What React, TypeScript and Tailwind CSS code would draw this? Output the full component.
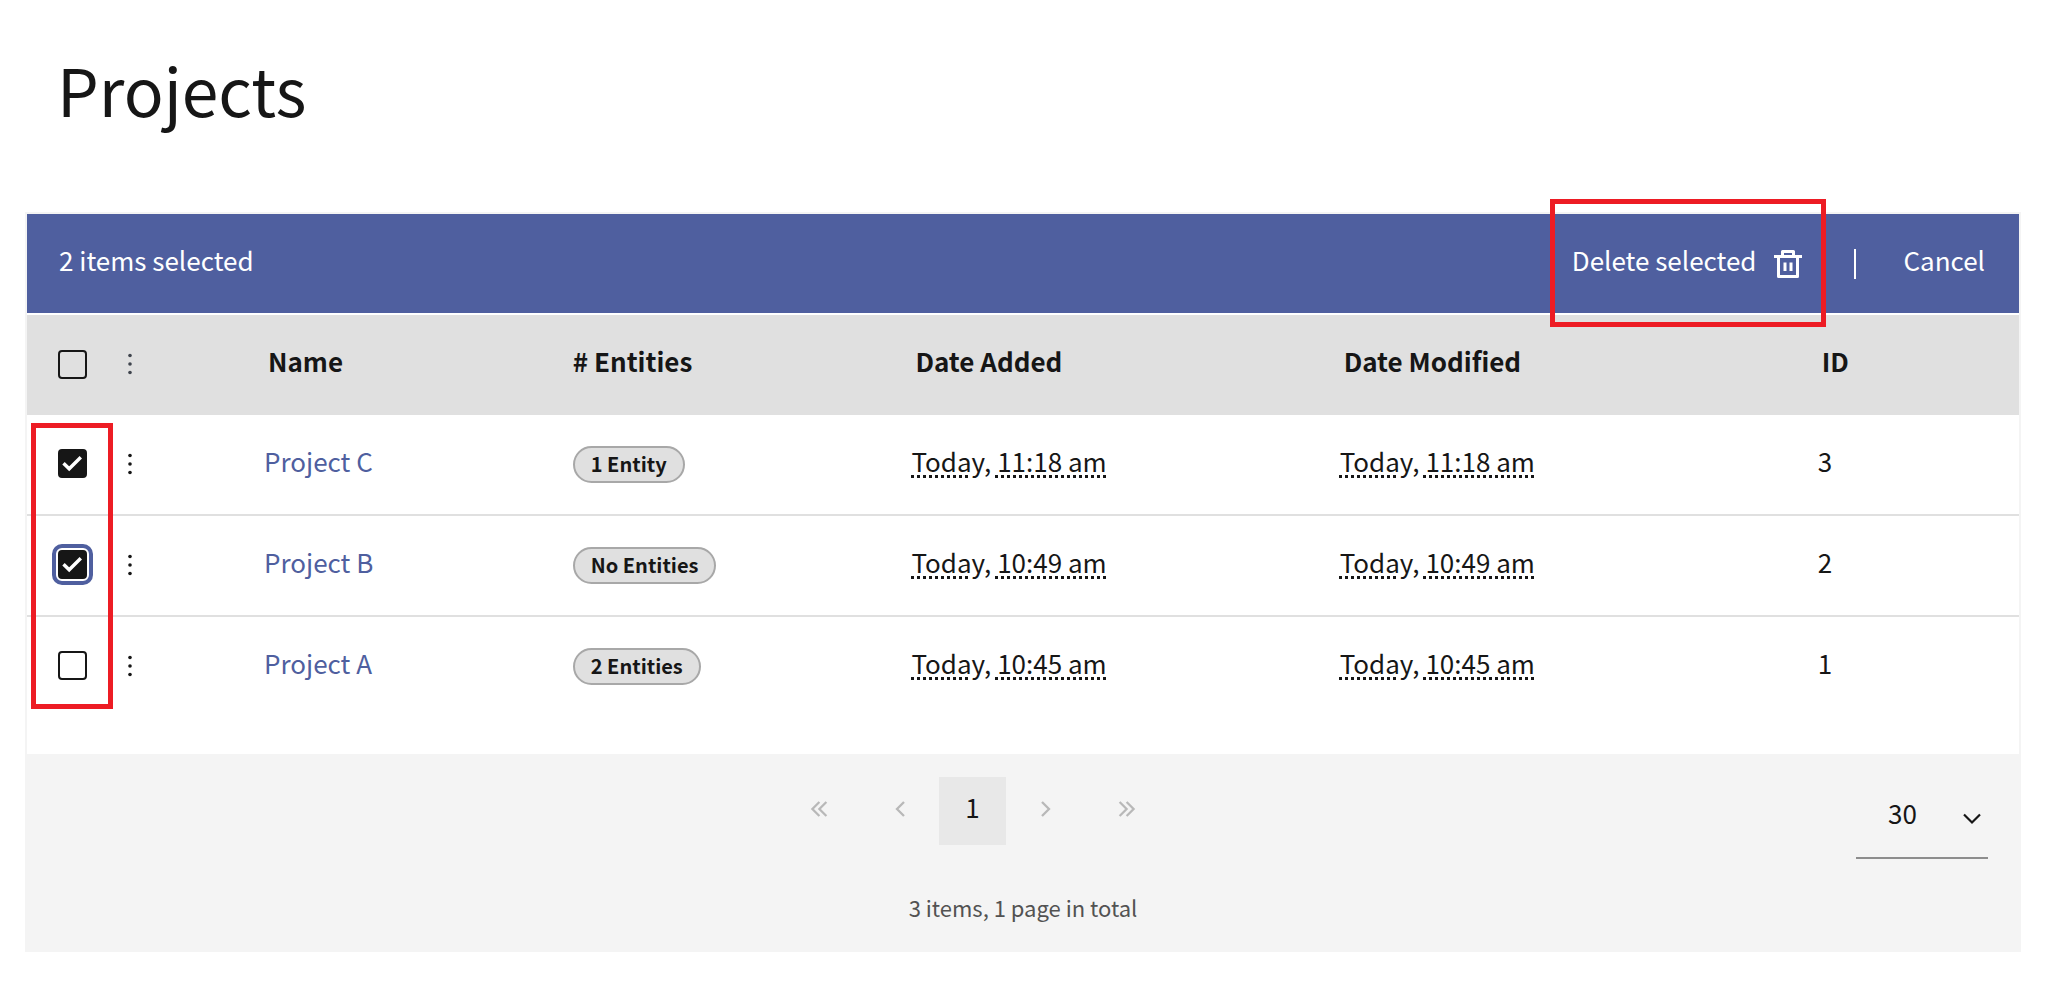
import { useState } from "react";

type Project = {
  id: number;
  name: string;
  entities: string;
  added: string;
  modified: string;
};

const projects: Project[] = [
  { id: 3, name: "Project C", entities: "1 Entity", added: "Today, 11:18 am", modified: "Today, 11:18 am" },
  { id: 2, name: "Project B", entities: "No Entities", added: "Today, 10:49 am", modified: "Today, 10:49 am" },
  { id: 1, name: "Project A", entities: "2 Entities", added: "Today, 10:45 am", modified: "Today, 10:45 am" },
];

function Checkbox({
  label,
  checked,
  focused,
  onChange,
}: {
  label: string;
  checked: boolean;
  focused?: boolean;
  onChange: () => void;
}) {
  return (
    <div className="relative size-[29px]">
      <input
        type="checkbox"
        aria-label={label}
        checked={checked}
        onChange={onChange}
        className={`block size-[29px] appearance-none rounded-[4px] border-2 border-[#161616] checked:bg-[#161616] ${
          focused ? "outline-4 outline-offset-2 outline-[#4f5f9f]" : "outline-none"
        }`}
      />
      {checked && (
        <svg viewBox="0 0 29 29" className="pointer-events-none absolute inset-0 size-[29px]" fill="none">
          <path d="M5.5 14.2l5.7 5.6L22.8 8.3" stroke="#fff" strokeWidth="3.4" />
        </svg>
      )}
    </div>
  );
}

function Dots() {
  return (
    <svg viewBox="0 0 6 22" className="h-[22px] w-[6px]" fill="currentColor">
      <circle cx="3" cy="2.5" r="1.8" />
      <circle cx="3" cy="11" r="1.8" />
      <circle cx="3" cy="19.5" r="1.8" />
    </svg>
  );
}

function TrashIcon() {
  return (
    <svg viewBox="0 0 28 28" className="size-7" fill="none" stroke="currentColor" strokeWidth="3">
      <path d="M0 6.5h28" />
      <path d="M4.5 6.5v20h19v-20" strokeLinejoin="round" />
      <path d="M8.5 6.5v-5h11v5" strokeLinejoin="round" />
      <path d="M11 12.5v8.5M17 12.5v8.5" />
    </svg>
  );
}

function Chevrons({ double, flip }: { double?: boolean; flip?: boolean }) {
  return (
    <svg
      viewBox="0 0 18 16"
      className={`h-4 w-[18px] ${flip ? "rotate-180" : ""}`}
      fill="none"
      stroke="currentColor"
      strokeWidth="2.3"
    >
      {double ? <path d="M9.4 1L2.4 8l7 7M16.4 1l-7 7 7 7" /> : <path d="M13 1L6 8l7 7" />}
    </svg>
  );
}

export default function App() {
  const [selected, setSelected] = useState<number[]>([3, 2]);
  const [focused, setFocused] = useState(2);
  const [pageSize, setPageSize] = useState("30");

  const toggle = (id: number) => {
    setFocused(id);
    setSelected((prev) => (prev.includes(id) ? prev.filter((x) => x !== id) : [...prev, id]));
  };
  const allSelected = selected.length === projects.length;

  return (
    <main className="min-h-screen bg-white pr-[29px] pb-7 pl-[25px] font-['Noto_Sans_CJK_SC','Noto_Sans',sans-serif] text-[26px] leading-9 text-[#161616]">
      <h1 className="px-8 pt-10 pb-[76px] text-[66px] leading-24">Projects</h1>

      <section className="border-2 border-[#f4f4f4]">
        {/* Bulk action bar */}
        <div className="mb-0.5 flex h-[99px] items-center justify-between bg-[#4f5f9f] pr-[34px] pl-8 text-white">
          <span className="pb-2">{selected.length} items selected</span>
          <div className="flex h-full items-center">
            <div className="relative h-full">
              <button className="flex h-full items-center gap-[18px] pr-6 pl-[22px]">
                <span className="pb-2">Delete selected</span>
                <TrashIcon />
              </button>
              <div className="pointer-events-none absolute inset-x-0 -top-[15px] -bottom-3.5 z-10 border-5 border-[#ed1c24]" />
            </div>
            <span className="ml-7 h-[30px] w-0.5 bg-white" />
            <button className="ml-[47px] pb-2">Cancel</button>
          </div>
        </div>

        <div className="relative bg-white pb-9">
          <table className="w-full table-fixed border-separate border-spacing-0 text-left">
            <colgroup>
              <col className="w-[86px]" />
              <col className="w-[131px]" />
              <col className="w-[15.5%]" />
              <col className="w-[17%]" />
              <col className="w-[21.5%]" />
              <col className="w-[24%]" />
              <col />
            </colgroup>
            <thead>
              <tr className="h-25 bg-[#e0e0e0]">
                <th className="pb-0.5 pl-[31px]">
                  <Checkbox
                    label="Select all"
                    checked={allSelected}
                    onChange={() => setSelected(allSelected ? [] : projects.map((p) => p.id))}
                  />
                </th>
                <th className="pb-0.5 pl-3.5 text-[#3f444d]">
                  <Dots />
                </th>
                <th className="pb-2 pl-6">Name</th>
                <th className="pb-2 pl-5"># Entities</th>
                <th className="pb-2 pl-6">Date Added</th>
                <th className="pb-2 pl-6">Date Modified</th>
                <th className="pb-2 pl-6">ID</th>
              </tr>
            </thead>
            <tbody>
              {projects.map((p) => (
                <tr
                  key={p.id}
                  className="h-[101px] *:border-b-2 *:border-[#e0e0e0] last:*:border-transparent"
                >
                  <td className="pb-0.5 pl-[31px]">
                    <Checkbox
                      label={`Select ${p.name}`}
                      checked={selected.includes(p.id)}
                      focused={focused === p.id}
                      onChange={() => toggle(p.id)}
                    />
                  </td>
                  <td className="pb-0.5 pl-3.5">
                    <button aria-label={`Actions for ${p.name}`} className="block">
                      <Dots />
                    </button>
                  </td>
                  <td className="pb-2 pl-5">
                    <a href="#" className="text-[#4f5f9f]">
                      {p.name}
                    </a>
                  </td>
                  <td className="pl-5">
                    <span className="block w-fit rounded-full border-2 border-[#a8a8a8] bg-[#e0e0e0] px-4 pb-0.5 text-[20px] leading-[31px] font-semibold">
                      {p.entities}
                    </span>
                  </td>
                  <td className="pb-2 pl-5">
                    <span className="underline decoration-dotted decoration-3 underline-offset-3">{p.added}</span>
                  </td>
                  <td className="pb-2 pl-5">
                    <span className="underline decoration-dotted decoration-3 underline-offset-3">{p.modified}</span>
                  </td>
                  <td className="pb-2 pl-5">{p.id}</td>
                </tr>
              ))}
            </tbody>
          </table>
          <div className="pointer-events-none absolute top-[108px] left-1 h-[286px] w-[82px] border-5 border-[#ed1c24]" />
        </div>

        {/* Pagination */}
        <footer className="bg-[#f4f4f4] pt-[23px] pb-[25px]">
          <div className="flex items-start pr-[31px] pl-[62px]">
            <nav className="flex flex-1 items-center justify-center gap-[14px] text-[#b8b8b8]">
              <button aria-label="First page" className="flex h-17 w-[67px] items-center justify-center pb-1">
                <Chevrons double />
              </button>
              <div className="flex gap-1.5">
                <button aria-label="Previous page" className="flex h-17 w-[67px] items-center justify-center pb-1">
                  <Chevrons />
                </button>
                <button aria-current="page" className="h-17 w-[67px] bg-[#e8e8e8] pb-2 text-[#161616]">
                  1
                </button>
                <button aria-label="Next page" className="flex h-17 w-[67px] items-center justify-center pb-1">
                  <Chevrons flip />
                </button>
              </div>
              <button aria-label="Last page" className="flex h-17 w-[67px] items-center justify-center pb-1">
                <Chevrons double flip />
              </button>
            </nav>
            <div className="relative w-[132px]">
              <select
                aria-label="Items per page"
                value={pageSize}
                onChange={(e) => setPageSize(e.target.value)}
                className="h-[82px] w-full appearance-none border-b-2 border-[#8d8d8d] bg-transparent pb-2 pl-8"
              >
                <option>30</option>
                <option>60</option>
              </select>
              <svg
                viewBox="0 0 18 12"
                className="pointer-events-none absolute top-9 right-[7px] h-3 w-[18px]"
                fill="none"
                stroke="currentColor"
                strokeWidth="2.2"
              >
                <path d="M1 1.5l8 8 8-8" />
              </svg>
            </div>
          </div>
          <p className="mt-[30px] text-center text-[22px] text-[#525252]">3 items, 1 page in total</p>
        </footer>
      </section>
    </main>
  );
}
